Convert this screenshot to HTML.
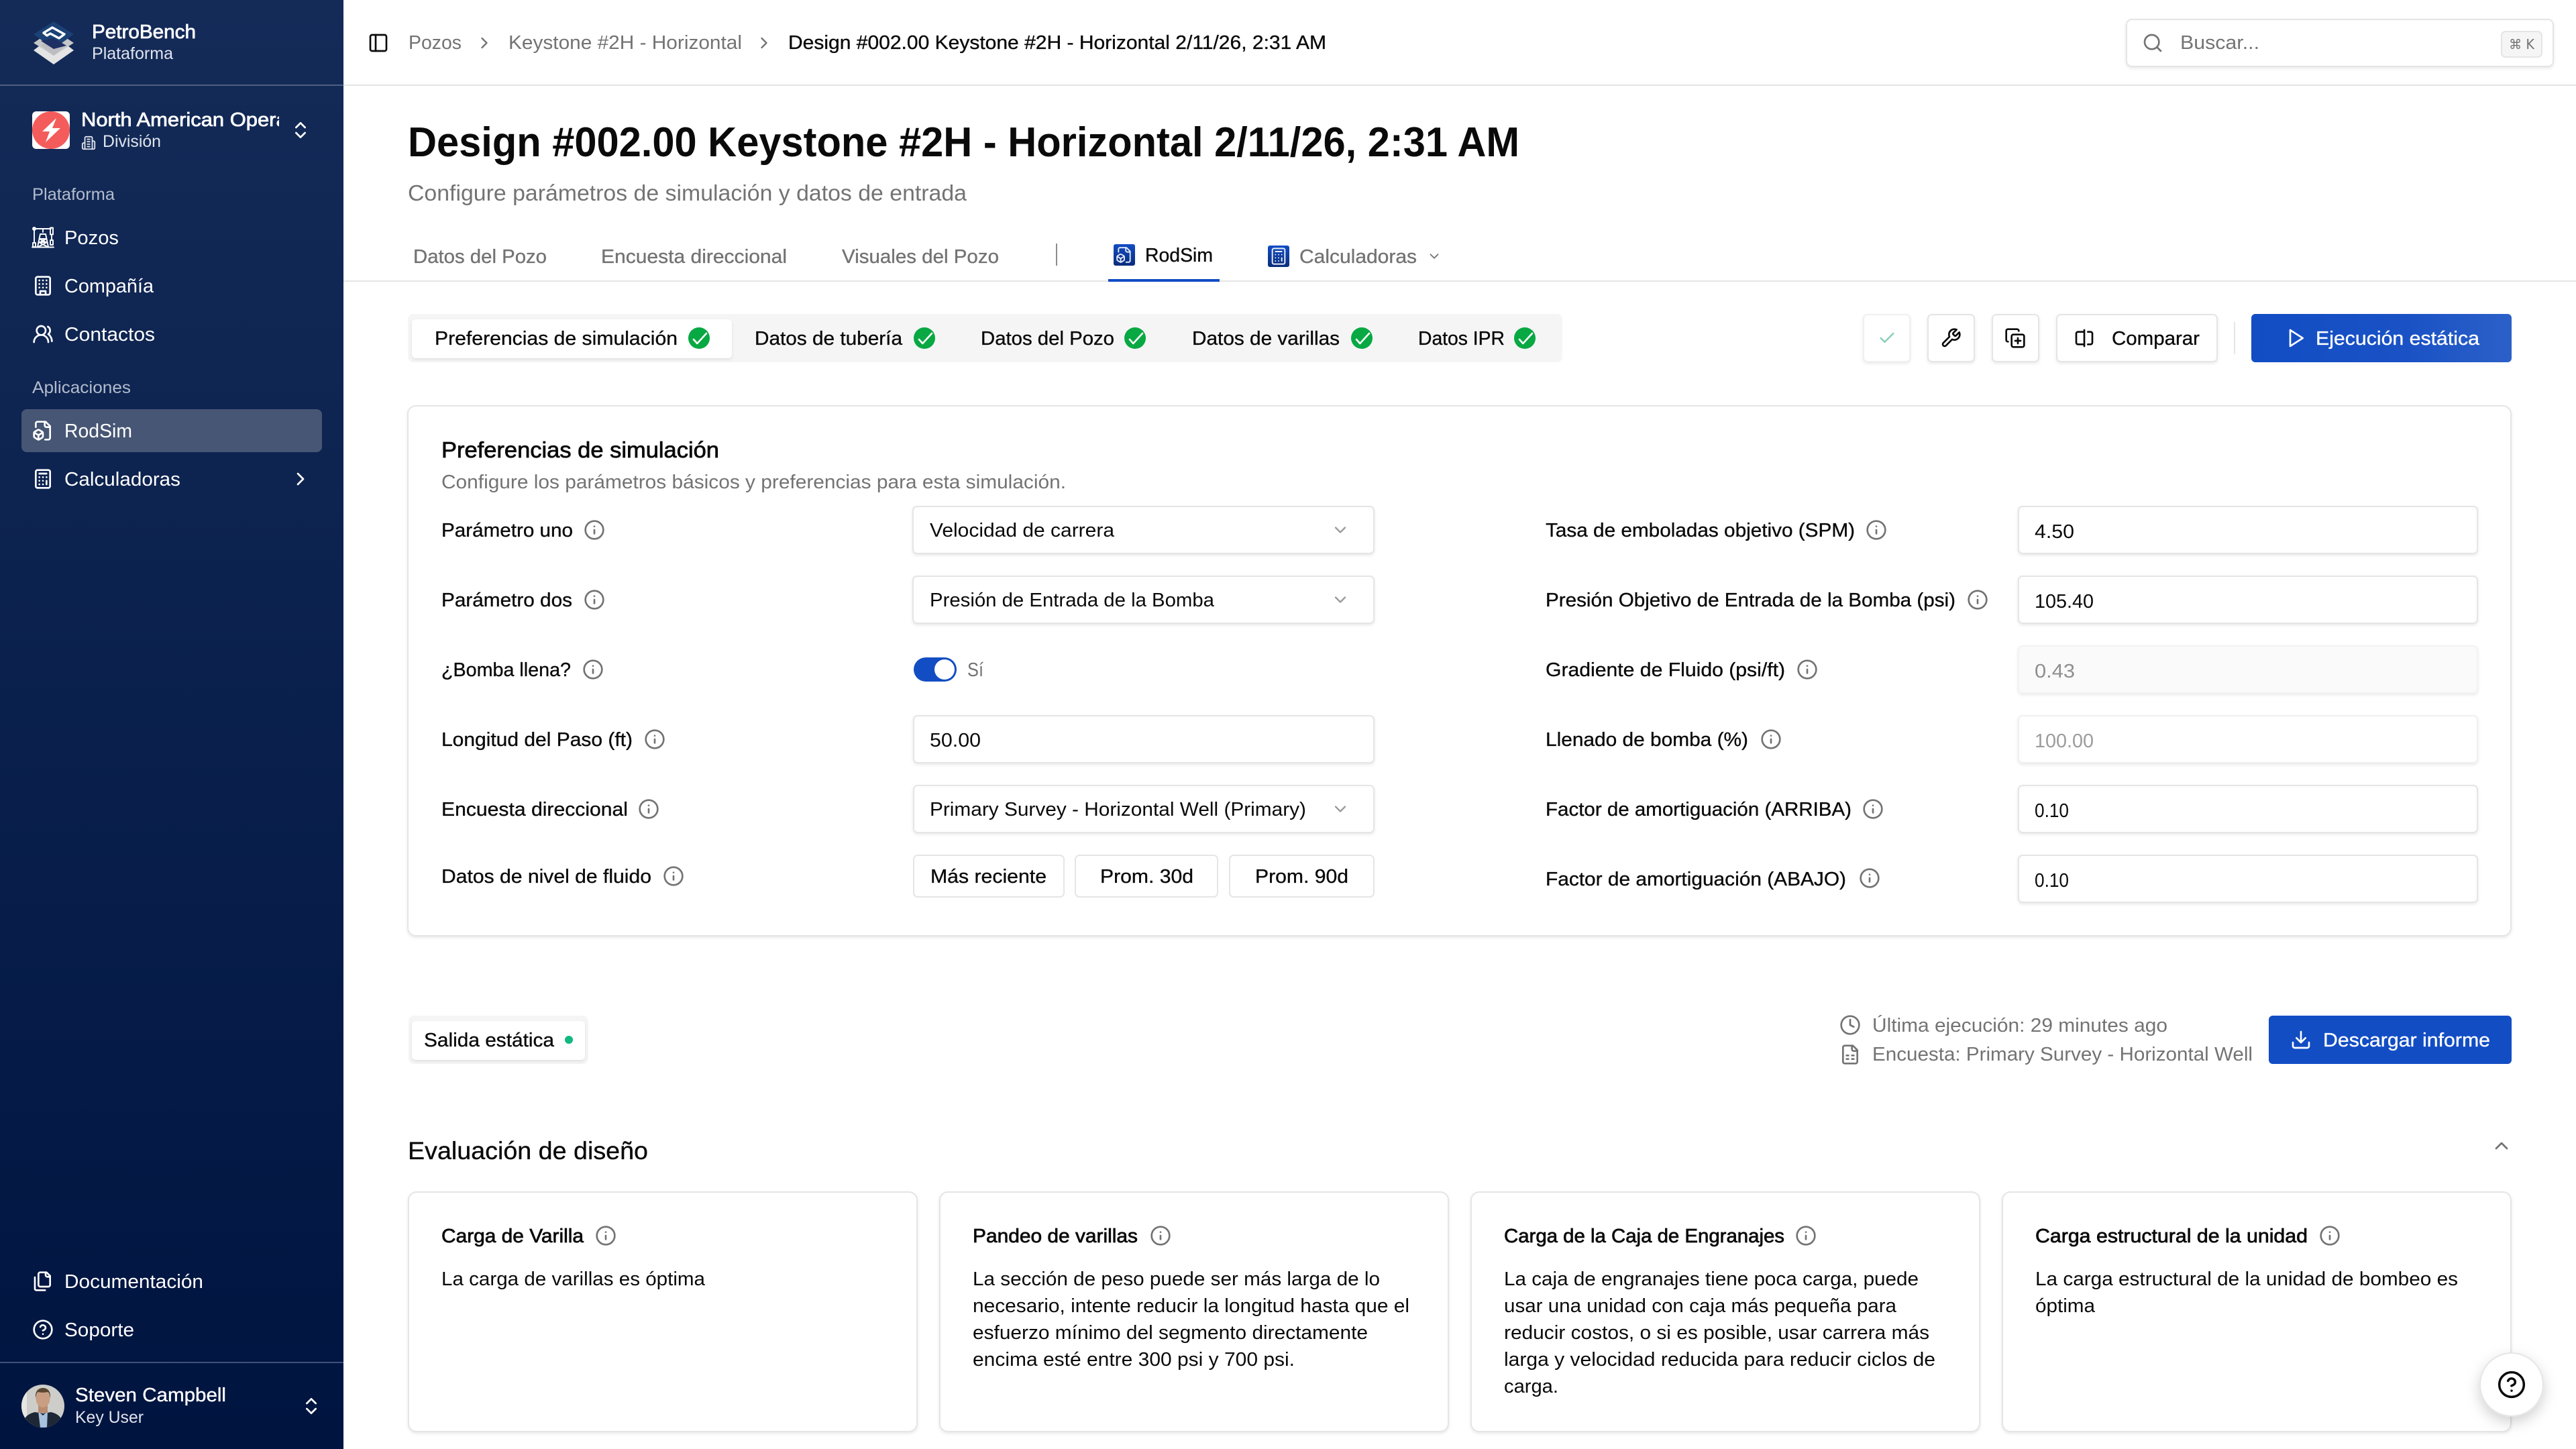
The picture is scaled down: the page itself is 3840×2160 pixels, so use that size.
<!DOCTYPE html>
<html lang="es">
<head>
<meta charset="utf-8">
<title>PetroBench</title>
<style>
html,body{margin:0;padding:0;background:#fff;width:3840px;height:2160px;overflow:hidden}
svg#r{position:absolute;left:0;top:0;display:block;font-family:"Liberation Sans","DejaVu Sans",sans-serif}
.i{fill:none;stroke-width:2;stroke-linecap:round;stroke-linejoin:round}
.wh{stroke:#fff}.bk{stroke:#0a0a0a}.gy{stroke:#737373}.lg{stroke:#9a9a9a}
.f20{font-size:20px}.f25{font-size:25px}.f29{font-size:29px}.f33{font-size:33px}.f37{font-size:37px}.f62{font-size:62px}
.b{font-weight:700}
.m{stroke:currentColor;stroke-width:.35px}
.sb{stroke:currentColor;stroke-width:.75px}
.W{fill:#fff;color:#fff}.K{fill:#0a0a0a;color:#0a0a0a}.G{fill:#737373;color:#737373}.S{fill:#b3bccd}.D{fill:#e0e4ec}
.box{fill:#fff;stroke:#e5e5e5;stroke-width:2}
</style>
</head>
<body>
<svg id="r" xmlns="http://www.w3.org/2000/svg" width="3840" height="2160" viewBox="0 0 3840 2160">
<defs>
<linearGradient id="side" x1="0" y1="0" x2="0" y2="1"><stop offset="0" stop-color="#142b58"/><stop offset="1" stop-color="#001440"/></linearGradient>
<linearGradient id="tabg" x1="0" y1="0" x2="0" y2="1"><stop offset="0" stop-color="#124dc4"/><stop offset="1" stop-color="#0a2c7c"/></linearGradient>
<linearGradient id="prim" x1="0" y1="0" x2="1" y2="0"><stop offset="0" stop-color="#124dc4"/><stop offset=".6" stop-color="#1a52c5"/><stop offset="1" stop-color="#2c60c8"/></linearGradient>
<filter id="sh" x="-10%" y="-20%" width="120%" height="150%"><feDropShadow dx="0" dy="2" stdDeviation="2" flood-color="#000" flood-opacity=".09"/></filter>
<filter id="sh2" x="-50%" y="-50%" width="200%" height="200%"><feDropShadow dx="0" dy="8" stdDeviation="10" flood-color="#000" flood-opacity=".18"/></filter>
<clipPath id="av"><circle cx="64" cy="2096" r="32"/></clipPath>
<symbol id="info" viewBox="0 0 24 24"><circle cx="12" cy="12" r="10"/><path d="M12 16v-4M12 8h.01"/></symbol>
<symbol id="chr" viewBox="0 0 24 24"><path d="m9 18 6-6-6-6"/></symbol>
<symbol id="chd" viewBox="0 0 24 24"><path d="m6 9 6 6 6-6"/></symbol>
<symbol id="chu" viewBox="0 0 24 24"><path d="m18 15-6-6-6 6"/></symbol>
<symbol id="ud" viewBox="0 0 24 24"><path d="m7 15 5 5 5-5M7 9l5-5 5 5"/></symbol>
<symbol id="calc" viewBox="0 0 24 24"><rect x="4" y="2" width="16" height="20" rx="2"/><path d="M8 6h8M16 14v4M16 10h.01M12 10h.01M8 10h.01M12 14h.01M8 14h.01M12 18h.01M8 18h.01"/></symbol>
<symbol id="fbox" viewBox="0 0 24 24"><path d="M14.5 22H18a2 2 0 0 0 2-2V7l-5-5H6a2 2 0 0 0-2 2v4"/><path d="M14 2v4a2 2 0 0 0 2 2h4"/><path d="M3 13.1a2 2 0 0 0-1 1.76v3.24a2 2 0 0 0 .97 1.78L6 21.7a2 2 0 0 0 2.03.01L11 19.9a2 2 0 0 0 1-1.76V14.9a2 2 0 0 0-.97-1.78L8 11.3a2 2 0 0 0-2.03-.01Z"/><path d="M7 17v5M11.7 14.2 7 17l-4.7-2.8"/></symbol>
<g id="ok"><circle r="16" fill="#08a843"/><path d="M-8 2-2.7 8 11-7" fill="none" stroke="#fff" stroke-width="2.6" stroke-linecap="round" stroke-linejoin="round"/></g>
</defs>

<!-- sidebar -->
<rect width="512" height="2160" fill="url(#side)"/>
<rect y="126" width="512" height="2" fill="#4f5f80"/>
<rect y="2030" width="512" height="2" fill="#41507a"/>
<path d="M80 52 110 75 80 96 50 75Z" fill="#e4e4e4"/>
<path d="M80 44 110 64 80 83 50 64Z" fill="#c6c7c9"/>
<path d="M80 55 99 67 80 83 61 67Z" fill="#bcbdc0"/>
<path d="M80 32 110 51 80 73 50 51Z" fill="#1b4175"/>
<path d="M80 57 99 68 80 73 61 61Z" fill="#1d2f63"/>
<path d="M65 49 78 41 96 51 88 57 75 50 70 53Z" fill="none" stroke="#fff" stroke-width="3.4" stroke-linejoin="round"/>
<text x="137" y="57" textLength="155" lengthAdjust="spacingAndGlyphs" class="f29 sb W">PetroBench</text>
<text x="137" y="88" textLength="121" lengthAdjust="spacingAndGlyphs" class="f25 D">Plataforma</text>
<rect x="48" y="166" width="56" height="56" rx="6" fill="#fff"/>
<circle cx="76" cy="194" r="28" fill="#f45c5c"/>
<path d="M84 176 63 196 74 196 68 212 90 191 78 191 84 176Z" fill="#fff"/>
<svg x="121" y="160" width="295" height="40"><text x="0" y="28" textLength="373" lengthAdjust="spacingAndGlyphs" class="f29 sb W">North American Operations</text></svg>
<g class="i" stroke="#e0e4ec" transform="translate(121 202) scale(.92)"><path d="M6 22V4a2 2 0 0 1 2-2h8a2 2 0 0 1 2 2v18Z"/><path d="M6 12H4a2 2 0 0 0-2 2v6a2 2 0 0 0 2 2h2"/><path d="M18 9h2a2 2 0 0 1 2 2v9a2 2 0 0 1-2 2h-2"/><path d="M10 6h4M10 10h4M10 14h4M10 18h4"/></g>
<text x="153" y="219" textLength="87" lengthAdjust="spacingAndGlyphs" class="f25 D">División</text>
<use href="#ud" x="432" y="178" width="32" height="32" class="i wh"/>

<text x="48" y="298" textLength="123" lengthAdjust="spacingAndGlyphs" class="f25 S">Plataforma</text>
<g fill="none" stroke="#fff" stroke-width="1.9" stroke-linecap="round" stroke-linejoin="round">
<path d="M48 368.500H80M51 341H76M51 341V362M77 350V358"/><circle cx="51" cy="341" r="2"/>
<rect x="75" y="339.500" width="4" height="10"/><rect x="75" y="358" width="4" height="7"/><rect x="49" y="362" width="4" height="6"/>
<path d="M64 342V346M60 349H68L72 368M60 349 56 368M59 356H69M58 361H70M58 361 71 368M70 361 57 368M59 356 68 361M69 356 60 361"/>
</g>
<text x="96" y="364" textLength="81" lengthAdjust="spacingAndGlyphs" class="f29 W">Pozos</text>
<g class="i wh" transform="translate(48 410) scale(1.3333)"><rect x="4" y="2" width="16" height="20" rx="2"/><path d="M9 22v-4h6v4M8 6h.01M16 6h.01M12 6h.01M12 10h.01M12 14h.01M16 10h.01M16 14h.01M8 10h.01M8 14h.01"/></g>
<text x="96" y="436" textLength="133" lengthAdjust="spacingAndGlyphs" class="f29 W">Compañía</text>
<g class="i wh" transform="translate(48 482) scale(1.3333)"><path d="M18 21a8 8 0 0 0-16 0"/><circle cx="10" cy="8" r="5"/><path d="M22 20c0-3.370-2-6.500-4-8a5 5 0 0 0-.45-8.300"/></g>
<text x="96" y="508" textLength="135" lengthAdjust="spacingAndGlyphs" class="f29 W">Contactos</text>
<text x="48" y="586" textLength="147" lengthAdjust="spacingAndGlyphs" class="f25 S">Aplicaciones</text>
<rect x="32" y="610" width="448" height="64" rx="8" fill="#475674"/>
<use href="#fbox" x="48" y="626" width="32" height="32" class="i wh"/>
<text x="96" y="652" textLength="101" lengthAdjust="spacingAndGlyphs" class="f29 W">RodSim</text>
<use href="#calc" x="48" y="698" width="32" height="32" class="i wh"/>
<text x="96" y="724" textLength="173" lengthAdjust="spacingAndGlyphs" class="f29 W">Calculadoras</text>
<use href="#chr" x="432" y="698" width="32" height="32" class="i wh"/>
<g class="i wh" transform="translate(48 1894) scale(1.3333)"><path d="M20 7h-3a2 2 0 0 1-2-2V2"/><path d="M9 18a2 2 0 0 1-2-2V4a2 2 0 0 1 2-2h7l4 4v10a2 2 0 0 1-2 2Z"/><path d="M3 7.600v12.800A1.600 1.600 0 0 0 4.600 22h9.800"/></g>
<text x="96" y="1920" textLength="207" lengthAdjust="spacingAndGlyphs" class="f29 W">Documentación</text>
<g class="i wh" transform="translate(48 1966) scale(1.3333)"><circle cx="12" cy="12" r="10"/><path d="M9.090 9a3 3 0 0 1 5.830 1c0 2-3 3-3 3M12 17h.01"/></g>
<text x="96" y="1992" textLength="104" lengthAdjust="spacingAndGlyphs" class="f29 W">Soporte</text>
<g clip-path="url(#av)">
<rect x="32" y="2064" width="64" height="64" fill="#cdcec9"/>
<rect x="32" y="2064" width="8" height="64" fill="#e6e6e3"/>
<path d="M34 2128c0-14 6-20 18-23l12 2 12-2c12 3 18 9 18 23Z" fill="#1d2736"/>
<path d="M57 2104 64 2110 71 2104 70 2128H60Z" fill="#a7c1de"/>
<rect x="57" y="2092" width="14" height="14" fill="#b98c70"/>
<ellipse cx="64" cy="2085" rx="10.500" ry="13" fill="#c99e82"/>
<path d="M53 2084c-1-10 4-15 11-15s12 5 11 15c-1-5-2-8-4-9-5 1-10 1-14 0-2 1-3 4-4 9Z" fill="#5b4632"/>
</g>
<text x="112" y="2089" textLength="225" lengthAdjust="spacingAndGlyphs" class="f29 W m">Steven Campbell</text>
<text x="112" y="2121" textLength="102" lengthAdjust="spacingAndGlyphs" class="f25 D">Key User</text>
<use href="#ud" x="448" y="2080" width="32" height="32" class="i wh"/>

<!-- top bar -->
<rect x="512" y="126" width="3328" height="2" fill="#e5e5e5"/>
<g class="i bk" transform="translate(548 48) scale(1.3333)"><rect x="3" y="3" width="18" height="18" rx="2"/><path d="M9 3v18"/></g>
<text x="609" y="73" textLength="79" lengthAdjust="spacingAndGlyphs" class="f29 G">Pozos</text>
<use href="#chr" x="708" y="50" width="28" height="28" class="i gy"/>
<text x="758" y="73" textLength="348" lengthAdjust="spacingAndGlyphs" class="f29 G">Keystone #2H - Horizontal</text>
<use href="#chr" x="1125" y="50" width="28" height="28" class="i gy"/>
<text x="1175" y="73" textLength="802" lengthAdjust="spacingAndGlyphs" class="f29 K m">Design #002.00 Keystone #2H - Horizontal 2/11/26, 2:31 AM</text>
<rect x="3170" y="29" width="636" height="70" rx="8" class="box" filter="url(#sh)"/>
<g class="i gy" transform="translate(3193 48) scale(1.3333)"><path d="m21 21-4.340-4.340"/><circle cx="11" cy="11" r="8"/></g>
<text x="3250" y="73" textLength="118" lengthAdjust="spacingAndGlyphs" class="f29 G">Buscar...</text>
<rect x="3729" y="47" width="60" height="38" rx="6" fill="#f5f5f5" stroke="#e5e5e5" stroke-width="2"/>
<text x="3740" y="73" textLength="38" lengthAdjust="spacingAndGlyphs" class="f20 G" style="font-family:'DejaVu Sans',sans-serif">⌘ K</text>

<!-- title -->
<text x="608" y="233" textLength="1657" lengthAdjust="spacingAndGlyphs" class="f62 b K">Design #002.00 Keystone #2H - Horizontal 2/11/26, 2:31 AM</text>
<text x="608" y="299" textLength="833" lengthAdjust="spacingAndGlyphs" class="f33 G">Configure parámetros de simulación y datos de entrada</text>

<!-- tabs -->
<rect x="512" y="418" width="3328" height="2" fill="#e5e5e5"/>
<text x="616" y="392" textLength="199" lengthAdjust="spacingAndGlyphs" class="f29 G m">Datos del Pozo</text>
<text x="896" y="392" textLength="277" lengthAdjust="spacingAndGlyphs" class="f29 G m">Encuesta direccional</text>
<text x="1255" y="392" textLength="234" lengthAdjust="spacingAndGlyphs" class="f29 G m">Visuales del Pozo</text>
<rect x="1574" y="363" width="2" height="33" fill="#8c8c8c"/>
<rect x="1660" y="364" width="32" height="32" rx="3" fill="url(#tabg)"/>
<use href="#fbox" x="1663" y="367" width="26" height="26" class="i" stroke="#e8edf8" style="stroke-width:1.700"/>
<text x="1707" y="390" textLength="101" lengthAdjust="spacingAndGlyphs" class="f29 K m">RodSim</text>
<rect x="1652" y="416" width="166" height="4" fill="#124dc4"/>
<rect x="1890" y="366" width="32" height="32" rx="3" fill="url(#tabg)"/>
<use href="#calc" x="1892" y="368" width="28" height="28" class="i" stroke="#e8edf8" style="stroke-width:1.700"/>
<text x="1937" y="392" textLength="175" lengthAdjust="spacingAndGlyphs" class="f29 G m">Calculadoras</text>
<use href="#chd" x="2127" y="371" width="22" height="22" class="i gy"/>

<!-- step strip -->
<rect x="608" y="468" width="1721" height="72" rx="8" fill="#f5f5f5"/>
<rect x="614" y="476" width="477" height="58" rx="6" fill="#fff" filter="url(#sh)"/>
<text x="648" y="514" textLength="362" lengthAdjust="spacingAndGlyphs" class="f29 K m">Preferencias de simulación</text>
<use href="#ok" x="1042" y="504"/>
<text x="1125" y="514" textLength="220" lengthAdjust="spacingAndGlyphs" class="f29 K m">Datos de tubería</text>
<use href="#ok" x="1378" y="504"/>
<text x="1462" y="514" textLength="199" lengthAdjust="spacingAndGlyphs" class="f29 K m">Datos del Pozo</text>
<use href="#ok" x="1692" y="504"/>
<text x="1777" y="514" textLength="220" lengthAdjust="spacingAndGlyphs" class="f29 K m">Datos de varillas</text>
<use href="#ok" x="2030" y="504"/>
<text x="2114" y="514" textLength="129" lengthAdjust="spacingAndGlyphs" class="f29 K m">Datos IPR</text>
<use href="#ok" x="2273" y="504"/>

<!-- action buttons -->
<rect x="2778" y="469" width="69" height="70" rx="6" fill="#fff" stroke="#f0f0f0" stroke-width="2" filter="url(#sh)"/>
<g class="i" stroke="#86cdb5" transform="translate(2799 490) scale(1.1667)"><path d="M20 6 9 17l-5-5"/></g>
<rect x="2874" y="469" width="69" height="70" rx="6" class="box" filter="url(#sh)"/>
<g class="i bk" transform="translate(2892 488) scale(1.3333)"><path d="M14.700 6.300a1 1 0 0 0 0 1.400l1.600 1.600a1 1 0 0 0 1.400 0l3.770-3.770a6 6 0 0 1-7.940 7.940l-6.910 6.910a2.120 2.120 0 0 1-3-3l6.910-6.910a6 6 0 0 1 7.940-7.940l-3.760 3.760z"/></g>
<rect x="2970" y="469" width="69" height="70" rx="6" class="box" filter="url(#sh)"/>
<g class="i bk" transform="translate(2988 488) scale(1.3333)"><path d="M15 12v6M12 15h6"/><rect x="8" y="8" width="14" height="14" rx="2"/><path d="M4 16c-1.100 0-2-.9-2-2V4c0-1.100.9-2 2-2h10c1.100 0 2 .9 2 2"/></g>
<rect x="3066" y="469" width="239" height="70" rx="6" class="box" filter="url(#sh)"/>
<g class="i bk" transform="translate(3091 488) scale(1.3333)"><path d="M12 3v18M12 5H5a2 2 0 0 0-2 2v10a2 2 0 0 0 2 2h7M16 5h3a2 2 0 0 1 2 2v10a2 2 0 0 1-2 2h-3"/></g>
<text x="3148" y="514" textLength="131" lengthAdjust="spacingAndGlyphs" class="f29 K m">Comparar</text>
<rect x="3330" y="480" width="2" height="48" fill="#e5e5e5"/>
<rect x="3356" y="468" width="388" height="72" rx="6" fill="url(#prim)"/>
<g class="i wh" transform="translate(3406 488) scale(1.3333)"><path d="M6 3l14 9-14 9V3Z"/></g>
<text x="3452" y="514" textLength="244" lengthAdjust="spacingAndGlyphs" class="f29 W m">Ejecución estática</text>

<!-- prefs card -->
<rect x="608" y="605" width="3135" height="790" rx="12" class="box" filter="url(#sh)"/>
<text x="658" y="682" textLength="414" lengthAdjust="spacingAndGlyphs" class="f33 sb K">Preferencias de simulación</text>
<text x="658" y="728" textLength="931" lengthAdjust="spacingAndGlyphs" class="f29 G">Configure los parámetros básicos y preferencias para esta simulación.</text>

<text x="658" y="800" textLength="196" lengthAdjust="spacingAndGlyphs" class="f29 K m">Parámetro uno</text>
<use href="#info" x="870" y="774" width="32" height="32" class="i gy"/>
<text x="658" y="904" textLength="195" lengthAdjust="spacingAndGlyphs" class="f29 K m">Parámetro dos</text>
<use href="#info" x="870" y="878" width="32" height="32" class="i gy"/>
<text x="658" y="1008" textLength="193" lengthAdjust="spacingAndGlyphs" class="f29 K m">¿Bomba llena?</text>
<use href="#info" x="868" y="982" width="32" height="32" class="i gy"/>
<text x="658" y="1112" textLength="285" lengthAdjust="spacingAndGlyphs" class="f29 K m">Longitud del Paso (ft)</text>
<use href="#info" x="960" y="1086" width="32" height="32" class="i gy"/>
<text x="658" y="1216" textLength="278" lengthAdjust="spacingAndGlyphs" class="f29 K m">Encuesta direccional</text>
<use href="#info" x="951" y="1190" width="32" height="32" class="i gy"/>
<text x="658" y="1316" textLength="313" lengthAdjust="spacingAndGlyphs" class="f29 K m">Datos de nivel de fluido</text>
<use href="#info" x="988" y="1290" width="32" height="32" class="i gy"/>

<rect x="1361" y="755" width="687" height="70" rx="6" class="box" filter="url(#sh)"/>
<text x="1386" y="800" textLength="275" lengthAdjust="spacingAndGlyphs" class="f29 K">Velocidad de carrera</text>
<use href="#chd" x="1984" y="776" width="28" height="28" class="i lg"/>
<rect x="1361" y="859" width="687" height="70" rx="6" class="box" filter="url(#sh)"/>
<text x="1386" y="904" textLength="424" lengthAdjust="spacingAndGlyphs" class="f29 K">Presión de Entrada de la Bomba</text>
<use href="#chd" x="1984" y="880" width="28" height="28" class="i lg"/>
<rect x="1362" y="980" width="64" height="36" rx="18" fill="#124dc4"/>
<circle cx="1408" cy="998" r="15" fill="#fff"/>
<text x="1442" y="1008" textLength="24" lengthAdjust="spacingAndGlyphs" class="f29 G">Sí</text>
<rect x="1362" y="1067" width="686" height="70" rx="6" class="box" filter="url(#sh)"/>
<text x="1386" y="1113" textLength="76" lengthAdjust="spacingAndGlyphs" class="f29 K">50.00</text>
<rect x="1362" y="1171" width="686" height="70" rx="6" class="box" filter="url(#sh)"/>
<text x="1386" y="1216" textLength="561" lengthAdjust="spacingAndGlyphs" class="f29 K">Primary Survey - Horizontal Well (Primary)</text>
<use href="#chd" x="1984" y="1192" width="28" height="28" class="i lg"/>
<rect x="1362" y="1275" width="224" height="62" rx="6" class="box"/>
<text x="1387" y="1316" textLength="173" lengthAdjust="spacingAndGlyphs" class="f29 K m">Más reciente</text>
<rect x="1603" y="1275" width="212" height="62" rx="6" class="box"/>
<text x="1640" y="1316" textLength="139" lengthAdjust="spacingAndGlyphs" class="f29 K m">Prom. 30d</text>
<rect x="1833" y="1275" width="215" height="62" rx="6" class="box"/>
<text x="1871" y="1316" textLength="139" lengthAdjust="spacingAndGlyphs" class="f29 K m">Prom. 90d</text>

<text x="2304" y="800" textLength="461" lengthAdjust="spacingAndGlyphs" class="f29 K m">Tasa de emboladas objetivo (SPM)</text>
<use href="#info" x="2781" y="774" width="32" height="32" class="i gy"/>
<text x="2304" y="904" textLength="611" lengthAdjust="spacingAndGlyphs" class="f29 K m">Presión Objetivo de Entrada de la Bomba (psi)</text>
<use href="#info" x="2932" y="878" width="32" height="32" class="i gy"/>
<text x="2304" y="1008" textLength="357" lengthAdjust="spacingAndGlyphs" class="f29 K m">Gradiente de Fluido (psi/ft)</text>
<use href="#info" x="2678" y="982" width="32" height="32" class="i gy"/>
<text x="2304" y="1112" textLength="302" lengthAdjust="spacingAndGlyphs" class="f29 K m">Llenado de bomba (%)</text>
<use href="#info" x="2624" y="1086" width="32" height="32" class="i gy"/>
<text x="2304" y="1216" textLength="456" lengthAdjust="spacingAndGlyphs" class="f29 K m">Factor de amortiguación (ARRIBA)</text>
<use href="#info" x="2776" y="1190" width="32" height="32" class="i gy"/>
<text x="2304" y="1320" textLength="448" lengthAdjust="spacingAndGlyphs" class="f29 K m">Factor de amortiguación (ABAJO)</text>
<use href="#info" x="2771" y="1293" width="32" height="32" class="i gy"/>

<rect x="3009" y="755" width="684" height="70" rx="6" class="box" filter="url(#sh)"/>
<text x="3033" y="802" textLength="59" lengthAdjust="spacingAndGlyphs" class="f29 K">4.50</text>
<rect x="3009" y="859" width="684" height="70" rx="6" class="box" filter="url(#sh)"/>
<text x="3033" y="906" textLength="88" lengthAdjust="spacingAndGlyphs" class="f29 K">105.40</text>
<rect x="3009" y="963" width="684" height="70" rx="6" fill="#fafafa" stroke="#f2f2f2" stroke-width="2" filter="url(#sh)"/>
<text x="3033" y="1010" textLength="60" lengthAdjust="spacingAndGlyphs" class="f29" fill="#8f8f8f">0.43</text>
<rect x="3009" y="1067" width="684" height="70" rx="6" fill="#fff" stroke="#f0f0f0" stroke-width="2" filter="url(#sh)"/>
<text x="3033" y="1114" textLength="88" lengthAdjust="spacingAndGlyphs" class="f29" fill="#9c9c9c">100.00</text>
<rect x="3009" y="1171" width="684" height="70" rx="6" class="box" filter="url(#sh)"/>
<text x="3033" y="1218" textLength="51" lengthAdjust="spacingAndGlyphs" class="f29 K">0.10</text>
<rect x="3009" y="1275" width="684" height="70" rx="6" class="box" filter="url(#sh)"/>
<text x="3033" y="1322" textLength="51" lengthAdjust="spacingAndGlyphs" class="f29 K">0.10</text>

<!-- output bar -->
<rect x="609" y="1514" width="268" height="72" rx="8" fill="#f5f5f5"/>
<rect x="614" y="1522" width="258" height="58" rx="6" fill="#fff" filter="url(#sh)"/>
<text x="632" y="1560" textLength="194" lengthAdjust="spacingAndGlyphs" class="f29 K m">Salida estática</text>
<circle cx="848" cy="1550" r="6" fill="#10b981"/>
<g class="i gy" transform="translate(2742 1512) scale(1.3333)"><circle cx="12" cy="12" r="10"/><path d="M12 6v6l4 2"/></g>
<text x="2791" y="1538" textLength="440" lengthAdjust="spacingAndGlyphs" class="f29 G">Última ejecución: 29 minutes ago</text>
<g class="i gy" transform="translate(2742 1556) scale(1.3333)"><path d="M15 2H6a2 2 0 0 0-2 2v16a2 2 0 0 0 2 2h12a2 2 0 0 0 2-2V7Z"/><path d="M14 2v4a2 2 0 0 0 2 2h4M8 13h2M14 13h2M8 17h2M14 17h2"/></g>
<text x="2791" y="1581" textLength="567" lengthAdjust="spacingAndGlyphs" class="f29 G">Encuesta: Primary Survey - Horizontal Well</text>
<rect x="3382" y="1514" width="362" height="72" rx="6" fill="#124dc4"/>
<g class="i wh" transform="translate(3414 1534) scale(1.3333)"><path d="M21 15v4a2 2 0 0 1-2 2H5a2 2 0 0 1-2-2v-4M7 10l5 5 5-5M12 15V3"/></g>
<text x="3463" y="1560" textLength="249" lengthAdjust="spacingAndGlyphs" class="f29 W m">Descargar informe</text>

<!-- evaluation -->
<text x="608" y="1728" textLength="358" lengthAdjust="spacingAndGlyphs" class="f37 K m">Evaluación de diseño</text>
<use href="#chu" x="3713" y="1692" width="32" height="32" class="i gy"/>

<rect x="609" y="1777" width="758" height="357" rx="12" class="box" filter="url(#sh)"/>
<rect x="1401" y="1777" width="758" height="357" rx="12" class="box" filter="url(#sh)"/>
<rect x="2193" y="1777" width="758" height="357" rx="12" class="box" filter="url(#sh)"/>
<rect x="2985" y="1777" width="758" height="357" rx="12" class="box" filter="url(#sh)"/>

<text x="658" y="1852" textLength="212" lengthAdjust="spacingAndGlyphs" class="f29 sb K">Carga de Varilla</text>
<use href="#info" x="887" y="1826" width="32" height="32" class="i gy"/>
<text x="658" y="1916" textLength="393" lengthAdjust="spacingAndGlyphs" class="f29 K">La carga de varillas es óptima</text>

<text x="1450" y="1852" textLength="246" lengthAdjust="spacingAndGlyphs" class="f29 sb K">Pandeo de varillas</text>
<use href="#info" x="1714" y="1826" width="32" height="32" class="i gy"/>
<text x="1450" y="1916" textLength="607" lengthAdjust="spacingAndGlyphs" class="f29 K">La sección de peso puede ser más larga de lo</text>
<text x="1450" y="1956" textLength="651" lengthAdjust="spacingAndGlyphs" class="f29 K">necesario, intente reducir la longitud hasta que el</text>
<text x="1450" y="1996" textLength="589" lengthAdjust="spacingAndGlyphs" class="f29 K">esfuerzo mínimo del segmento directamente</text>
<text x="1450" y="2036" textLength="480" lengthAdjust="spacingAndGlyphs" class="f29 K">encima esté entre 300 psi y 700 psi.</text>

<text x="2242" y="1852" textLength="418" lengthAdjust="spacingAndGlyphs" class="f29 sb K">Carga de la Caja de Engranajes</text>
<use href="#info" x="2676" y="1826" width="32" height="32" class="i gy"/>
<text x="2242" y="1916" textLength="618" lengthAdjust="spacingAndGlyphs" class="f29 K">La caja de engranajes tiene poca carga, puede</text>
<text x="2242" y="1956" textLength="585" lengthAdjust="spacingAndGlyphs" class="f29 K">usar una unidad con caja más pequeña para</text>
<text x="2242" y="1996" textLength="634" lengthAdjust="spacingAndGlyphs" class="f29 K">reducir costos, o si es posible, usar carrera más</text>
<text x="2242" y="2036" textLength="643" lengthAdjust="spacingAndGlyphs" class="f29 K">larga y velocidad reducida para reducir ciclos de</text>
<text x="2242" y="2076" textLength="81" lengthAdjust="spacingAndGlyphs" class="f29 K">carga.</text>

<text x="3034" y="1852" textLength="406" lengthAdjust="spacingAndGlyphs" class="f29 sb K">Carga estructural de la unidad</text>
<use href="#info" x="3457" y="1826" width="32" height="32" class="i gy"/>
<text x="3034" y="1916" textLength="630" lengthAdjust="spacingAndGlyphs" class="f29 K">La carga estructural de la unidad de bombeo es</text>
<text x="3034" y="1956" textLength="89" lengthAdjust="spacingAndGlyphs" class="f29 K">óptima</text>

<!-- help fab -->
<circle cx="3744" cy="2064" r="47" fill="#fff" stroke="#e5e5e5" stroke-width="2" filter="url(#sh2)"/>
<g class="i bk" transform="translate(3722 2042) scale(1.8333)" style="stroke-width:1.900"><circle cx="12" cy="12" r="10"/><path d="M9.090 9a3 3 0 0 1 5.830 1c0 2-3 3-3 3M12 17h.01"/></g>
</svg>
</body>
</html>
